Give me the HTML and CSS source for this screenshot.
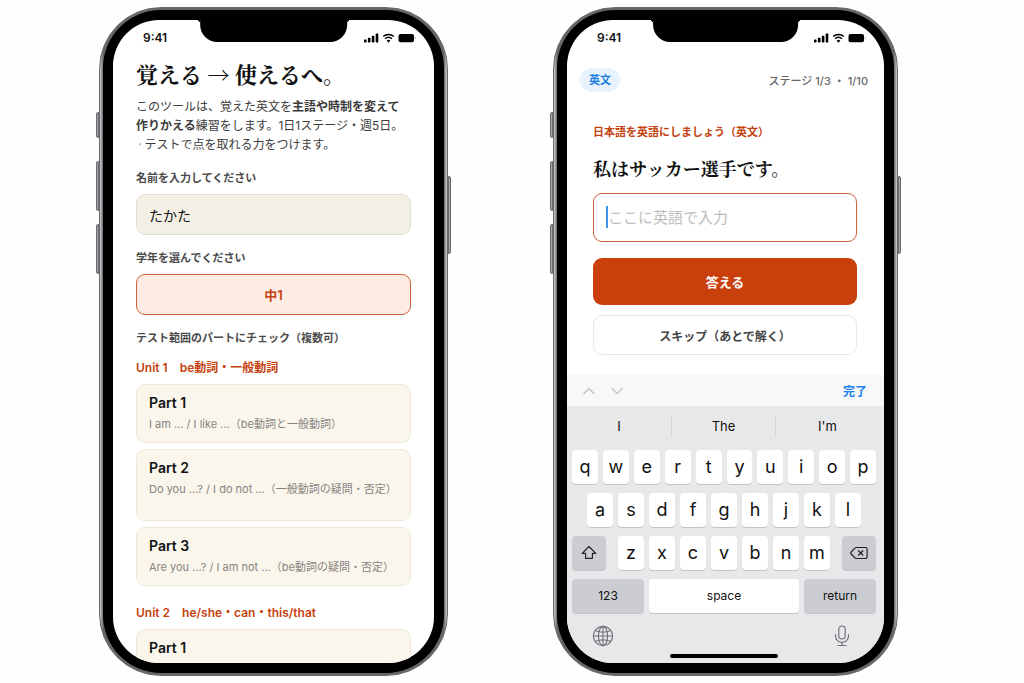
FILE: index.html
```html
<!DOCTYPE html>
<html lang="ja">
<head>
    <meta charset="UTF-8">
    <meta name="viewport" content="width=device-width, initial-scale=1">
    <title>覚える → 使えるへ。</title>
    <link rel="stylesheet" href="styles.css">
</head>
<body>
    <!-- アイコン定義 -->
    <svg class="icon-defs" aria-hidden="true">
        <symbol id="status-icons" viewBox="0 0 52 10">
            <rect x="0" y="6.4" width="2.6" height="3" rx="0.7"/>
            <rect x="3.9" y="4.8" width="2.6" height="4.6" rx="0.7"/>
            <rect x="7.8" y="2.8" width="2.6" height="6.6" rx="0.7"/>
            <rect x="11.7" y="0.6" width="2.6" height="8.8" rx="0.7"/>
            <path d="M19.2 3.5a7.8 7.8 0 0 1 10.6 0M21.1 5.7a5 5 0 0 1 6.8 0" fill="none" stroke="#000" stroke-width="1.5"/>
            <path d="M22.6 7.5a2.9 2.9 0 0 1 3.8 0l-1.9 2.2z"/>
            <rect x="34.5" y="1" width="15.5" height="8.2" rx="2"/>
            <rect x="50.8" y="4" width="0.9" height="2.4" rx="0.4" fill="#aaa"/>
        </symbol>
    </svg>

    <main class="stage">
        <section class="phone">
            <span class="side-btn mute"></span>
            <span class="side-btn vol-up"></span>
            <span class="side-btn vol-down"></span>
            <span class="side-btn power"></span>
            <div class="bezel">
                <div class="screen">
                    <div class="notch"></div>
                    <div class="status">
                        <span>9:41</span>
                        <svg class="status-icons"><use href="#status-icons"/></svg>
                    </div>
                    <form class="setup">
                        <h1>覚える → 使えるへ。</h1>
                        <p class="lead">このツールは、覚えた英文を<b>主語や時制を変えて<br>作りかえる</b>練習をします。1日1ステージ・週5日。<br><span class="tick">‘</span> テストで点を取れる力をつけます。</p>

                        <label class="field-label" for="name">名前を入力してください</label>
                        <input class="name-input" id="name" type="text" value="たかた">

                        <p class="field-label">学年を選んでください</p>
                        <button class="grade" type="button">中1</button>

                        <p class="field-label">テスト範囲のパートにチェック（複数可）</p>

                        <h2>Unit 1　be動詞・一般動詞</h2>
                        <div class="parts">
                            <label class="part">
                                <input type="checkbox">
                                <strong>Part 1</strong>
                                <small>I am ... / I like ...（be動詞と一般動詞）</small>
                            </label>
                            <label class="part tall">
                                <input type="checkbox">
                                <strong>Part 2</strong>
                                <small>Do you ...? / I do not ...（一般動詞の疑問・否定）</small>
                            </label>
                            <label class="part">
                                <input type="checkbox">
                                <strong>Part 3</strong>
                                <small>Are you ...? / I am not ...（be動詞の疑問・否定）</small>
                            </label>
                        </div>

                        <h2 class="next-unit">Unit 2　he/she・can・this/that</h2>
                        <div class="parts">
                            <label class="part">
                                <input type="checkbox">
                                <strong>Part 1</strong>
                            </label>
                        </div>
                    </form>
                </div>
            </div>
        </section>

        <section class="phone">
            <span class="side-btn mute"></span>
            <span class="side-btn vol-up"></span>
            <span class="side-btn vol-down"></span>
            <span class="side-btn power"></span>
            <div class="bezel">
                <div class="screen">
                    <div class="notch"></div>
                    <div class="status">
                        <span>9:41</span>
                        <svg class="status-icons"><use href="#status-icons"/></svg>
                    </div>
                    <div class="progress">
                        <span class="badge">英文</span>
                        <span>ステージ 1/3 ・ 1/10</span>
                    </div>
                    <form class="quiz">
                        <label class="hint" for="answer">日本語を英語にしましょう（英文）</label>
                        <p class="question">私はサッカー選手です。</p>
                        <div class="answer-box">
                            <input id="answer" type="text" placeholder="ここに英語で入力">
                            <span class="caret"></span>
                        </div>
                        <button class="submit" type="button">答える</button>
                        <button class="skip" type="button">スキップ（あとで解く）</button>
                    </form>

                    <div class="toolbar">
                        <button type="button" aria-label="前へ">
                            <svg width="14" height="10" viewBox="0 0 14 10"><path d="M1.5 8L7 2.5L12.5 8"/></svg>
                        </button>
                        <button type="button" aria-label="次へ">
                            <svg width="14" height="10" viewBox="0 0 14 10"><path d="M1.5 2L7 7.5L12.5 2"/></svg>
                        </button>
                        <button class="done" type="button">完了</button>
                    </div>
                    <div class="keyboard">
                        <div class="suggest">
                            <button type="button">I</button>
                            <button type="button">The</button>
                            <button type="button">I'm</button>
                        </div>
                        <div class="row">
                            <button type="button">q</button>
                            <button type="button">w</button>
                            <button type="button">e</button>
                            <button type="button">r</button>
                            <button type="button">t</button>
                            <button type="button">y</button>
                            <button type="button">u</button>
                            <button type="button">i</button>
                            <button type="button">o</button>
                            <button type="button">p</button>
                        </div>
                        <div class="row middle">
                            <button type="button">a</button>
                            <button type="button">s</button>
                            <button type="button">d</button>
                            <button type="button">f</button>
                            <button type="button">g</button>
                            <button type="button">h</button>
                            <button type="button">j</button>
                            <button type="button">k</button>
                            <button type="button">l</button>
                        </div>
                        <div class="row">
                            <button class="mod" type="button" aria-label="shift">
                                <svg width="18" height="18" viewBox="0 0 18 18"><path d="M9 2.5L2.2 9.3H5.6V14.3H12.4V9.3H15.8Z"/></svg>
                            </button>
                            <div class="row letters">
                                <button type="button">z</button>
                                <button type="button">x</button>
                                <button type="button">c</button>
                                <button type="button">v</button>
                                <button type="button">b</button>
                                <button type="button">n</button>
                                <button type="button">m</button>
                            </div>
                            <button class="mod" type="button" aria-label="delete">
                                <svg width="18" height="18" viewBox="0 0 18 18"><path d="M6.2 3.5H15.5a1.6 1.6 0 0 1 1.6 1.6V12.9a1.6 1.6 0 0 1-1.6 1.6H6.2a2 2 0 0 1-1.3-.6L1.2 10a1.4 1.4 0 0 1 0-2L4.9 4.1a2 2 0 0 1 1.3-.6ZM8.2 6.5l5 5M13.2 6.5l-5 5"/></svg>
                            </button>
                        </div>
                        <div class="row bottom">
                            <button class="fn" type="button">123</button>
                            <button type="button">space</button>
                            <button class="fn" type="button">return</button>
                        </div>
                        <div class="dock">
                            <button type="button" aria-label="言語">
                                <svg width="22" height="22" viewBox="0 0 22 22"><circle cx="11" cy="11" r="9.6"/><ellipse cx="11" cy="11" rx="4.6" ry="9.6"/><path d="M11 1.4V20.6M1.4 11H20.6M3.3 5.6q7.7 3.4 15.4 0M3.3 16.4q7.7-3.4 15.4 0"/></svg>
                            </button>
                            <button type="button" aria-label="音声入力">
                                <svg width="16" height="22" viewBox="0 0 16 22"><rect x="4.8" y="1" width="6.4" height="13" rx="3.2"/><path d="M1.5 9.5v1.8a6.5 6 0 0 0 13 0V9.5M8 17.3V20.5M4 20.5H12"/></svg>
                            </button>
                        </div>
                        <div class="home-bar"></div>
                    </div>
                </div>
            </div>
        </section>
    </main>
</body>
</html>
```
FILE: styles.css
```css
* {
    box-sizing: border-box;
}

body {
    margin: 0;
    background-color: #fefefe;
    color: #111;
    font-family: Inter, "Noto Sans CJK JP", sans-serif;
}

h1, h2, p {
    margin: 0;
}

button, input {
    font-family: inherit;
    color: inherit;
}

button {
    padding: 0;
    border: none;
    cursor: pointer;
}

.icon-defs {
    display: none;
}

.stage {
    display: grid;
    grid-template-columns: 349fr 345fr;
    gap: 105px;
    height: 100vh;
    min-height: 600px;
    padding: 7px 126px 7px 99px;
}

/* 本体 */
.phone {
    position: relative;
    min-height: 0;
    padding: 2px 3px;
    border: 1px solid #6a6b6e;
    border-radius: 62px;
    background: linear-gradient(90deg, #d0d0d2 0, #66676b 3px, #66676b calc(100% - 3px), #d0d0d2 100%);
}

.bezel {
    height: 100%;
    padding: 10px;
    border-radius: 58px;
    background-color: #000;
}

.screen {
    position: relative;
    display: flex;
    flex-direction: column;
    height: 100%;
    overflow: hidden;
    border-radius: 46px;
    background-color: #fff;
}

.side-btn {
    position: absolute;
    left: -4px;
    width: 3px;
    height: 50px;
    border: 1px solid #6a6b6e;
    border-radius: 2px 0 0 2px;
    background-color: #a5a6a8;
}

.mute {
    top: 104px;
    height: 26px;
}

.vol-up {
    top: 153px;
}

.vol-down {
    top: 216px;
}

.power {
    top: 168px;
    left: auto;
    right: -4px;
    height: 78px;
    border-radius: 0 2px 2px 0;
}

.notch {
    position: absolute;
    top: 0;
    left: 50%;
    width: 46%;
    height: 22px;
    border-radius: 0 0 17px 17px;
    background-color: #000;
    transform: translateX(-50%);
}

.notch::before, .notch::after {
    content: "";
    position: absolute;
    top: 0;
    left: -4px;
    width: 4px;
    height: 4px;
    background: radial-gradient(circle at 0 100%, transparent 4px, #000 4px);
}

.notch::after {
    left: auto;
    right: -4px;
    background: radial-gradient(circle at 100% 100%, transparent 4px, #000 4px);
}

.status {
    display: flex;
    justify-content: space-between;
    align-items: center;
    padding: 10px 18px 0 30px;
    font-size: 12px;
    font-weight: 600;
    line-height: 16px;
}

.status-icons {
    width: 52px;
    height: 10px;
}

/* 設定画面 */
.setup {
    display: flex;
    flex-direction: column;
    padding: 12px 23px 0;
}

h1 {
    font-family: "Noto Serif CJK JP", "Noto Sans CJK JP", serif;
    font-size: 22px;
    font-weight: 700;
    line-height: 32px;
    white-space: nowrap;
}

.lead {
    margin-top: 7px;
    color: #3c3c3c;
    font-size: 12px;
    line-height: 19px;
    white-space: nowrap;
}

.tick {
    padding-left: 3px;
    font-size: 8px;
}

.lead b {
    font-weight: 600;
}

.field-label {
    margin: 13px 0 6px;
    color: #4a4a4a;
    font-size: 11px;
    font-weight: 600;
    line-height: 20px;
}

.lead + .field-label {
    margin-top: 12px;
}

.name-input, .grade {
    flex: none;
    height: 41px;
    border-radius: 9px;
    font-size: 14px;
}

.name-input {
    padding: 0 12px;
    border: 1px solid #e2dfd6;
    background-color: #f4efe5;
}

.grade {
    border: 1px solid #cf6238;
    background-color: #fcece3;
    color: #c5420f;
    font-size: 13px;
    font-weight: 600;
}

h2 {
    margin: 4px 0 6px;
    color: #c5420f;
    font-size: 12px;
    font-weight: 600;
    line-height: 20px;
    white-space: nowrap;
}

.next-unit {
    margin-top: 17px;
}

.parts {
    display: flex;
    flex-direction: column;
    gap: 6px;
}

.part {
    display: flex;
    flex-direction: column;
    min-height: 59px;
    padding: 8px 12px 6px;
    border: 1px solid #efe8da;
    border-radius: 9px;
    background-color: #fbf6ec;
    white-space: nowrap;
}

.part.tall {
    min-height: 72px;
}

.part input {
    position: absolute;
    opacity: 0;
}

.part strong {
    font-size: 14px;
    font-weight: 600;
    line-height: 20px;
}

.part small {
    color: #85837f;
    font-size: 11px;
    line-height: 22px;
}

/* 問題画面 */
.progress {
    display: flex;
    justify-content: space-between;
    align-items: center;
    padding: 22px 16px 0 13px;
    color: #666;
    font-size: 11px;
    font-weight: 500;
}

.badge {
    padding: 0 9px;
    border-radius: 12px;
    background-color: #e8f3fd;
    color: #1b7fe0;
    font-weight: 600;
    line-height: 24px;
}

.quiz {
    display: flex;
    flex-direction: column;
    padding: 30px 27px 0 26px;
}

.hint {
    color: #c5420f;
    font-size: 11px;
    font-weight: 600;
    line-height: 20px;
}

.question {
    margin: 11px 0 10px;
    font-family: "Noto Serif CJK JP", "Noto Sans CJK JP", serif;
    font-size: 18px;
    font-weight: 700;
    line-height: 30px;
}

.answer-box {
    position: relative;
    display: flex;
    height: 49px;
    margin-bottom: 16px;
}

.answer-box input {
    width: 100%;
    padding: 0 14px;
    border: 1px solid #cf6238;
    border-radius: 9px;
    background-color: #fff;
    font-size: 15px;
}

.answer-box input::placeholder {
    color: #bdbdbd;
}

.caret {
    position: absolute;
    top: 13px;
    left: 13px;
    width: 2px;
    height: 22px;
    background-color: #3b94e6;
}

.submit {
    height: 47px;
    border-radius: 9px;
    background-color: #ca400c;
    color: #fff;
    font-size: 13px;
    font-weight: 600;
}

.skip {
    height: 40px;
    margin-top: 10px;
    border: 1px solid #e8e8e8;
    border-radius: 9px;
    background-color: #fff;
    color: #444;
    font-size: 12px;
    font-weight: 600;
}

/* キーボード */
.toolbar {
    display: flex;
    align-items: center;
    gap: 14px;
    height: 31px;
    margin-top: auto;
    padding: 0 17px 0 15px;
    background-color: #f7f8f9;
}

.toolbar button {
    background: none;
}

.toolbar svg {
    display: block;
    fill: none;
    stroke: #bfc0c2;
    stroke-width: 1.2;
}

.toolbar .done {
    margin-left: auto;
    color: #1b84ec;
    font-size: 12px;
    font-weight: 600;
}

.keyboard {
    display: flex;
    flex-direction: column;
    gap: 9px;
    padding: 9px 8px 5px 5px;
    background-color: #e7e8ea;
}

.suggest {
    display: grid;
    grid-template-columns: 1fr 1fr 1fr;
    height: 26px;
    margin: 0 -3px 0 -5px;
}

.suggest button {
    height: 22px;
    background: none;
    font-size: 13px;
}

.suggest button + button {
    border-left: 1px solid #d6d8db;
}

.row {
    display: flex;
    gap: 5px;
}

.row button {
    flex: 1;
    height: 34px;
    border-radius: 4px;
    background-color: #fff;
    box-shadow: 0 1px 0 #c3c5c8;
    font-size: 18px;
    line-height: 30px;
}

.middle {
    padding: 0 15px;
}

.letters {
    flex: 1;
    padding: 0 7px;
}

.row .mod {
    flex: none;
    width: 34px;
    background-color: #cbcdd3;
}

.mod svg {
    display: block;
    margin: 0 auto;
    fill: none;
    stroke: #222;
    stroke-width: 1.2;
    stroke-linejoin: round;
}

.bottom {
    display: grid;
    grid-template-columns: 72fr 150fr 72fr;
}

.row.bottom button {
    font-size: 12px;
}

.row.bottom .fn {
    background-color: #cbcdd3;
}

.dock {
    display: flex;
    justify-content: space-between;
    padding: 3px 26px 0 20px;
}

.dock button {
    background: none;
}

.dock svg {
    display: block;
    fill: none;
    stroke: #6d6f73;
    stroke-width: 1.1;
    stroke-linecap: round;
}

.home-bar {
    align-self: center;
    width: 108px;
    height: 4px;
    margin-top: -2px;
    border-radius: 2px;
    background-color: #000;
}
```
